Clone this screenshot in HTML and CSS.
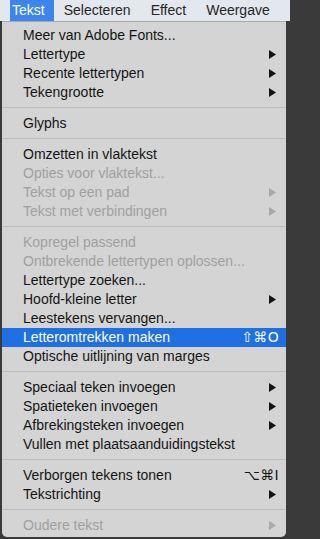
FILE: index.html
```html
<!DOCTYPE html>
<html lang="nl">
<head>
<meta charset="utf-8">
<title>Tekst menu</title>
<link rel="stylesheet" href="styles.css">
</head>
<body>
<div class="screen">
  <div class="menubar">
    <span class="mb-item first active">Tekst</span>
    <span class="mb-item">Selecteren</span>
    <span class="mb-item">Effect</span>
    <span class="mb-item">Weergave</span>
  </div>
  <div class="menu">
    <div class="item"><span>Meer van Adobe Fonts...</span></div>
    <div class="item"><span>Lettertype</span><svg class="arrow" viewBox="0 0 7 9"><polygon points="0,0 7,4.5 0,9"/></svg></div>
    <div class="item"><span>Recente lettertypen</span><svg class="arrow" viewBox="0 0 7 9"><polygon points="0,0 7,4.5 0,9"/></svg></div>
    <div class="item"><span>Tekengrootte</span><svg class="arrow" viewBox="0 0 7 9"><polygon points="0,0 7,4.5 0,9"/></svg></div>
    <div class="sep"></div>
    <div class="item"><span>Glyphs</span></div>
    <div class="sep"></div>
    <div class="item"><span>Omzetten in vlaktekst</span></div>
    <div class="item disabled"><span>Opties voor vlaktekst...</span></div>
    <div class="item disabled"><span>Tekst op een pad</span><svg class="arrow" viewBox="0 0 7 9"><polygon points="0,0 7,4.5 0,9"/></svg></div>
    <div class="item disabled"><span>Tekst met verbindingen</span><svg class="arrow" viewBox="0 0 7 9"><polygon points="0,0 7,4.5 0,9"/></svg></div>
    <div class="sep"></div>
    <div class="item disabled"><span>Kopregel passend</span></div>
    <div class="item disabled"><span>Ontbrekende lettertypen oplossen...</span></div>
    <div class="item"><span>Lettertype zoeken...</span></div>
    <div class="item"><span>Hoofd-kleine letter</span><svg class="arrow" viewBox="0 0 7 9"><polygon points="0,0 7,4.5 0,9"/></svg></div>
    <div class="item"><span>Leestekens vervangen...</span></div>
    <div class="item selected"><span>Letteromtrekken maken</span><span class="shortcut">⇧⌘O</span></div>
    <div class="item"><span>Optische uitlijning van marges</span></div>
    <div class="sep"></div>
    <div class="item"><span>Speciaal teken invoegen</span><svg class="arrow" viewBox="0 0 7 9"><polygon points="0,0 7,4.5 0,9"/></svg></div>
    <div class="item"><span>Spatieteken invoegen</span><svg class="arrow" viewBox="0 0 7 9"><polygon points="0,0 7,4.5 0,9"/></svg></div>
    <div class="item"><span>Afbrekingsteken invoegen</span><svg class="arrow" viewBox="0 0 7 9"><polygon points="0,0 7,4.5 0,9"/></svg></div>
    <div class="item"><span>Vullen met plaatsaanduidingstekst</span></div>
    <div class="sep"></div>
    <div class="item"><span>Verborgen tekens tonen</span><span class="shortcut">⌥⌘I</span></div>
    <div class="item"><span>Tekstrichting</span><svg class="arrow" viewBox="0 0 7 9"><polygon points="0,0 7,4.5 0,9"/></svg></div>
    <div class="sep"></div>
    <div class="item disabled"><span>Oudere tekst</span><svg class="arrow" viewBox="0 0 7 9"><polygon points="0,0 7,4.5 0,9"/></svg></div>
  </div>
</div>
</body>
</html>
```

FILE: styles.css
```css
html, body {
  margin: 0;
  padding: 0;
}
body {
  background: #3a3a3a;
  font-family: "Liberation Sans", Arial, "DejaVu Sans", sans-serif;
  font-size: 14px;
  color: #141414;
  width: 290px;
  height: 539px;
  overflow: hidden;
}
.screen {
  display: flex;
  flex-direction: column;
  width: 290px;
  height: 539px;
}
.menubar {
  display: flex;
  height: 21px;
  background: #e3e7ee;
  line-height: 21px;
  color: #262626;
}
.mb-item {
  padding: 0 10px;
}
.mb-item.first {
  margin-left: 10px;
  padding: 0 9px 0 2px;
}
.mb-item.active {
  background: #3b85ec;
  color: #ffffff;
}
.menu {
  margin: 0 4px 0 2px;
  background: #d4d4d4;
  border-top: 1px solid #a8a8a8;
  border-radius: 0 0 5px 5px;
  padding: 4px 0 2px;
  display: flex;
  flex-direction: column;
}
.item {
  display: flex;
  align-items: center;
  justify-content: space-between;
  height: 19px;
  line-height: 19px;
  padding: 0 10px 0 21px;
  white-space: nowrap;
}
.item.disabled {
  color: #a0a0a0;
}
.item.selected {
  background: #1f70e2;
  color: #ffffff;
}
.arrow {
  width: 7px;
  height: 9px;
  fill: #141414;
  flex: none;
}
.item.disabled .arrow {
  fill: #a8a8a8;
}
.shortcut {
  font-family: "DejaVu Sans", "Liberation Sans", sans-serif;
  font-size: 14px;
  margin-right: -3px;
  letter-spacing: 0.3px;
}
.sep {
  height: 1px;
  background: #bcbcbc;
  margin: 5px 0 6px;
}
```
